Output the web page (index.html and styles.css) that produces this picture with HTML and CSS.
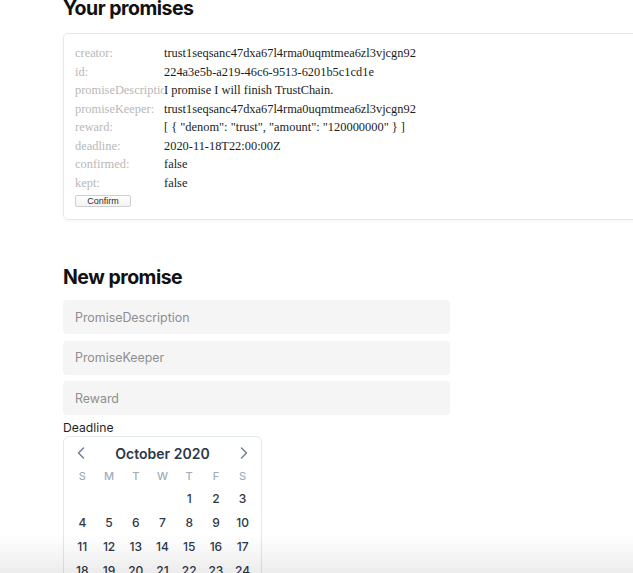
FILE: index.html
```html
<!DOCTYPE html>
<html lang="en">
<head>
<meta charset="utf-8">
<title>Promises</title>
<link rel="stylesheet" href="styles.css">
</head>
<body>
<main class="page">
  <h2 class="section-title first">Your promises</h2>
  <div class="card">
    <div class="row"><span class="label">creator:</span><span class="value">trust1seqsanc47dxa67l4rma0uqmtmea6zl3vjcgn92</span></div>
    <div class="row"><span class="label">id:</span><span class="value">224a3e5b-a219-46c6-9513-6201b5c1cd1e</span></div>
    <div class="row"><span class="label">promiseDescription:</span><span class="value">I promise I will finish TrustChain.</span></div>
    <div class="row"><span class="label">promiseKeeper:</span><span class="value">trust1seqsanc47dxa67l4rma0uqmtmea6zl3vjcgn92</span></div>
    <div class="row"><span class="label">reward:</span><span class="value">[ { "denom": "trust", "amount": "120000000" } ]</span></div>
    <div class="row"><span class="label">deadline:</span><span class="value">2020-11-18T22:00:00Z</span></div>
    <div class="row"><span class="label">confirmed:</span><span class="value">false</span></div>
    <div class="row"><span class="label">kept:</span><span class="value">false</span></div>
    <button class="confirm-btn" type="button">Confirm</button>
  </div>

  <h2 class="section-title second">New promise</h2>
  <form class="new-form">
    <input class="field" type="text" placeholder="PromiseDescription">
    <input class="field" type="text" placeholder="PromiseKeeper">
    <input class="field" type="text" placeholder="Reward">
    <label class="field-label">Deadline</label>
    <div class="calendar">
      <div class="cal-head">
        <span class="cal-nav"><svg width="8" height="12" viewBox="0 0 8 12"><path d="M6.5 1 L1.5 6 L6.5 11" fill="none" stroke="#718096" stroke-width="1.5" stroke-linecap="round" stroke-linejoin="round"/></svg></span>
        <span class="cal-title">October 2020</span>
        <span class="cal-nav"><svg width="8" height="12" viewBox="0 0 8 12"><path d="M1.5 1 L6.5 6 L1.5 11" fill="none" stroke="#718096" stroke-width="1.5" stroke-linecap="round" stroke-linejoin="round"/></svg></span>
      </div>
      <div class="cal-week">
        <span>S</span><span>M</span><span>T</span><span>W</span><span>T</span><span>F</span><span>S</span>
      </div>
      <div class="cal-days">
        <span></span><span></span><span></span><span></span><span>1</span><span>2</span><span>3</span>
        <span>4</span><span>5</span><span>6</span><span>7</span><span>8</span><span>9</span><span>10</span>
        <span>11</span><span>12</span><span>13</span><span>14</span><span>15</span><span>16</span><span>17</span>
        <span>18</span><span>19</span><span>20</span><span>21</span><span>22</span><span>23</span><span>24</span>
        <span>25</span><span>26</span><span>27</span><span>28</span><span>29</span><span>30</span><span>31</span>
      </div>
    </div>
  </form>
</main>
<div class="bottom-fade"></div>
</body>
</html>
```

FILE: styles.css
```css
html, body {
  margin: 0;
  padding: 0;
  overflow: hidden;
  background: #ffffff;
}

body {
  font-family: "Inter", "Liberation Sans", sans-serif;
  color: #1a1a1a;
}

.page {
  padding-left: 63px;
}

.section-title {
  font-family: "Inter", "Liberation Sans", sans-serif;
  font-size: 19.5px;
  line-height: 24px;
  font-weight: 700;
  letter-spacing: -0.5px;
  color: #111111;
  margin: 0;
}

.section-title.first {
  margin-top: -4px;
}

.section-title.second {
  margin-top: 44.5px;
}

.card {
  margin-top: 13px;
  width: 620px;
  box-sizing: border-box;
  border: 1px solid #e8e8e8;
  border-radius: 5px;
  box-shadow: 0 1px 3px rgba(0, 0, 0, 0.04);
  padding: 10px 11px 12px 11px;
  font-family: "Liberation Serif", "Times New Roman", serif;
  font-size: 12.4px;
}

.row {
  display: grid;
  grid-template-columns: 89px 1fr;
  line-height: 18.5px;
  height: 18.5px;
}

.label {
  color: #b8b8b8;
  white-space: nowrap;
  overflow: hidden;
}

.value {
  color: #1c1c1c;
  white-space: nowrap;
}

.confirm-btn {
  display: block;
  margin-top: 3px;
  width: 56px;
  height: 12px;
  padding: 0;
  font-family: "Liberation Sans", Arial, sans-serif;
  font-size: 9px;
  line-height: 10px;
  color: #2a2a2a;
  background: linear-gradient(#ffffff, #f3f3f3);
  border: 1px solid #cfcfcf;
  border-radius: 2px;
}

.new-form {
  margin-top: 11.5px;
}

.field {
  display: block;
  box-sizing: border-box;
  width: 387px;
  height: 34px;
  margin: 0 0 6.5px 0;
  padding: 0 12px;
  border: none;
  border-radius: 4px;
  background: #f5f5f5;
  font-family: "Inter", "Liberation Sans", sans-serif;
  font-size: 12.4px;
  color: #222;
  outline: none;
}

.field::placeholder {
  color: #8e8e8e;
}

.field-label {
  display: block;
  margin-top: -1.5px;
  font-size: 12.2px;
  line-height: 16px;
  color: #1f1f1f;
}

.calendar {
  width: 199px;
  box-sizing: border-box;
  border: 1px solid #e2e8f0;
  border-radius: 6px;
  padding: 5px 5px 6px 5px;
  background: #ffffff;
}

.cal-head {
  display: flex;
  align-items: center;
  justify-content: space-between;
  height: 22px;
}

.cal-nav {
  width: 24px;
  height: 22px;
  display: flex;
  align-items: center;
  justify-content: center;
}

.cal-title {
  font-size: 14px;
  font-weight: 600;
  color: #2d3748;
}

.cal-week {
  margin-top: 2px;
  display: grid;
  grid-template-columns: repeat(7, 1fr);
  height: 20px;
  align-items: center;
  text-align: center;
  font-size: 11px;
  font-weight: 500;
  color: #a0aec0;
}

.cal-days {
  display: grid;
  grid-template-columns: repeat(7, 1fr);
  grid-auto-rows: 24px;
  align-items: center;
  text-align: center;
  font-size: 12px;
  font-weight: 500;
  color: #2d3748;
}

.bottom-fade {
  position: fixed;
  left: 0;
  right: 0;
  bottom: 0;
  height: 38px;
  background: linear-gradient(to bottom, rgba(0, 0, 0, 0), rgba(0, 0, 0, 0.075));
  pointer-events: none;
}
```
